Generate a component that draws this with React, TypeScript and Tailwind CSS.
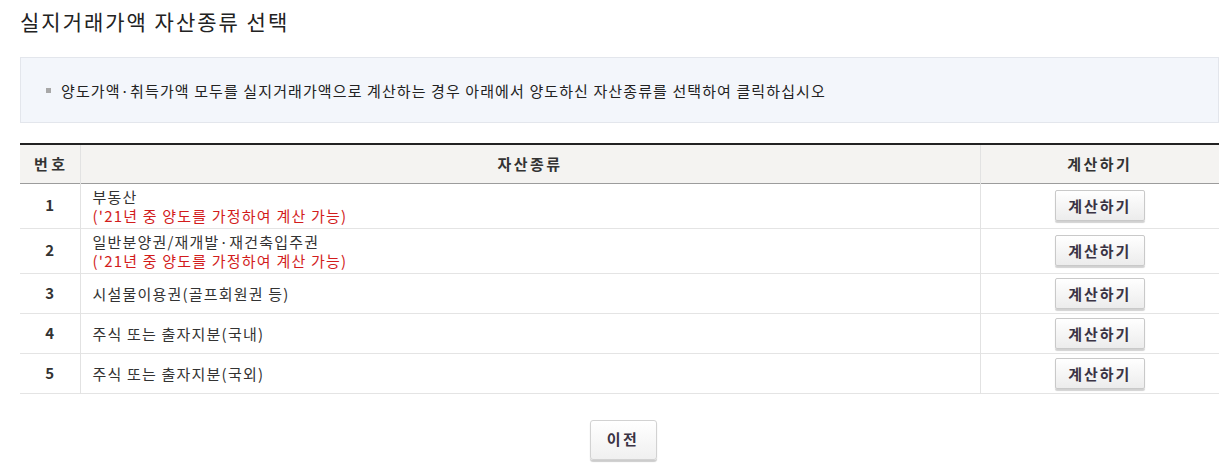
import React from 'react';

interface AssetRow {
  no: number;
  name: string;
  note?: string;
}

const rows: AssetRow[] = [
  { no: 1, name: '부동산', note: "('21년 중 양도를 가정하여 계산 가능)" },
  { no: 2, name: '일반분양권/재개발·재건축입주권', note: "('21년 중 양도를 가정하여 계산 가능)" },
  { no: 3, name: '시설물이용권(골프회원권 등)' },
  { no: 4, name: '주식 또는 출자지분(국내)' },
  { no: 5, name: '주식 또는 출자지분(국외)' },
];

const fontStack = "font-['Noto_Sans_CJK_KR','Noto_Sans',sans-serif]";

const CalcButton = () => (
  <button className="w-[90px] h-[31px] border border-[#c9c9c9] rounded-[2px] bg-gradient-to-b from-white to-[#ececec] shadow-[0_2px_1px_rgba(0,0,0,0.18)] text-[15px] font-bold text-[#3a3344] tracking-[2px] leading-none">
    계산하기
  </button>
);

const App = () => {
  return (
    <div className={`${fontStack} bg-white w-[1226px] h-[471px] px-5 text-[#333]`}>
      <h1 className="pt-[7px] h-[57px] text-[21px] leading-[28px] text-[#222] tracking-[2px]">
        실지거래가액 자산종류 선택
      </h1>

      <div className="w-[1199px] h-[66px] border border-[#e3e6ec] bg-[#f3f6fb] flex items-center pl-[25px]">
        <span className="w-[5px] h-[5px] bg-[#a8a8a8] mr-[10px]" />
        <p className="text-[15px] leading-none tracking-[1.1px] text-[#222]">
          양도가액·취득가액 모두를 실지거래가액으로 계산하는 경우 아래에서 양도하신 자산종류를 선택하여 클릭하십시오
        </p>
      </div>

      <table className="mt-[20px] w-[1199px] border-collapse border-t-2 border-t-[#222] text-[15px]">
        <thead>
          <tr className="h-[39px] bg-[#f4f3f1] border-b border-b-[#9c9c9c]">
            <th className="w-[60px] font-bold text-[#333] tracking-[3.5px] pl-[3px]">번호</th>
            <th className="border-l border-r border-[#e2e2e2] font-bold text-[#333] tracking-[2.5px]">자산종류</th>
            <th className="w-[239px] font-bold text-[#333] tracking-[2.5px]">계산하기</th>
          </tr>
        </thead>
        <tbody>
          {rows.map((row) => (
            <tr
              key={row.no}
              className={`${row.note ? 'h-[45px]' : 'h-[40px]'} border-b border-b-[#e4e4e4]`}
            >
              <td className="text-center font-bold text-[#333]">{row.no}</td>
              <td className="border-l border-r border-[#e2e2e2] pl-[12px] tracking-[1.2px] leading-[19px]">
                <div className="text-[#333]">{row.name}</div>
                {row.note && <div className="text-[#d21c1c]">{row.note}</div>}
              </td>
              <td className="text-center">
                <CalcButton />
              </td>
            </tr>
          ))}
        </tbody>
      </table>

      <div className="flex justify-center pt-[26px] pl-[20px]">
        <button className="w-[67px] h-[40px] border border-[#d2d2d2] rounded-[3px] bg-gradient-to-b from-white to-[#f0f0f0] shadow-[0_2px_1px_rgba(0,0,0,0.2)] text-[15px] font-bold text-[#3a3344] tracking-[2.5px]">
          이전
        </button>
      </div>
    </div>
  );
};

export default App;
